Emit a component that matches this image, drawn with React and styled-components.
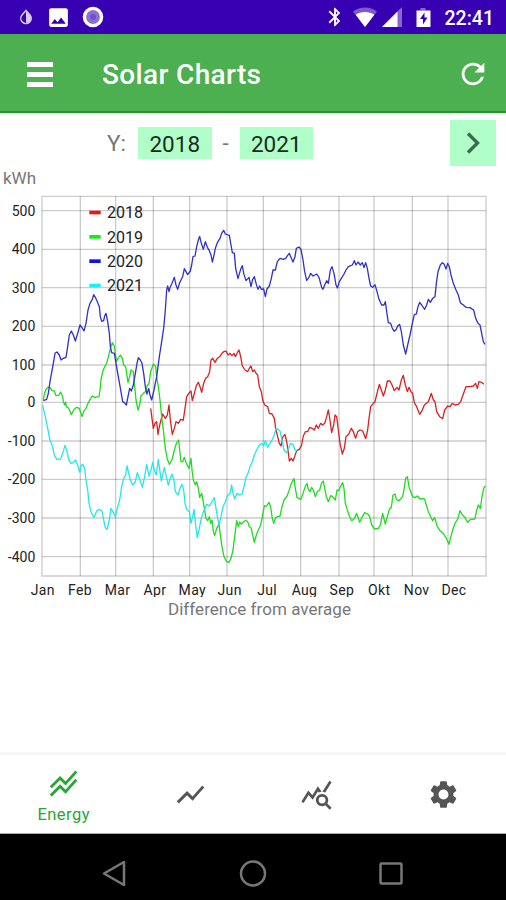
import React from "react"
import styled, { createGlobalStyle } from "styled-components"
import {
  MdBluetooth,
  MdImage,
  MdQueryStats,
  MdRefresh,
  MdSettings,
  MdShowChart,
  MdStackedLineChart,
} from "react-icons/md"

const GlobalStyle = createGlobalStyle`
  body {
    margin: 0;
    background: #fff;
    font-family: Roboto, "Liberation Sans", sans-serif;
  }
  * {
    box-sizing: border-box;
  }
  svg {
    display: block;
    flex: none;
  }
`

const Screen = styled.div`
  display: flex;
  flex-direction: column;
  width: 506px;
  height: 900px;
  overflow: hidden;
`

const StatusBar = styled.div`
  height: 34px;
  background: #3700b3;
  color: #fff;
  display: flex;
  justify-content: space-between;
  padding: 0 12px 0 18px;
`

const StatusGroup = styled.div`
  display: flex;
  align-items: center;
  gap: ${(props) => props.$gap};
`

const Clock = styled.span`
  font-size: 19.5px;
  font-weight: 500;
  margin: 2px 0 0 5px;
`

const AppBar = styled.header`
  height: 79px;
  background: #4caf50;
  border-bottom: 2px solid #1b9a24;
  color: #fff;
  display: flex;
  align-items: center;
  padding: 2px 16px 0 20px;
`

const Title = styled.h1`
  flex: 1;
  margin: 3px 0 0 42px;
  font-size: 28px;
  font-weight: 500;
  line-height: 34px;
  letter-spacing: 0.35px;
`

const IconBox = styled.div`
  margin-top: 2px;
`

const YearRow = styled.div`
  display: flex;
  align-items: center;
  height: 58px;
  margin-top: 1px;
  padding: 0 10px 0 107px;
  color: #777;
  font-size: 22.5px;
`

const Year = styled.div`
  width: 73.5px;
  height: 32px;
  line-height: 34px;
  text-align: center;
  background: #b0ffc8;
  color: #1c2b20;
`

const YearLabel = styled.span`
  width: 31px;
`

const Dash = styled.span`
  width: 28px;
  text-align: center;
`

const NextButton = styled.button`
  margin-left: auto;
  width: 46px;
  height: 46px;
  padding: 0;
  border: 0;
  background: #b0ffc8;
  display: grid;
  place-items: center;
`

const Unit = styled.div`
  height: 18px;
  padding: 0 3px;
  font-size: 17px;
  line-height: 12px;
  color: #777;
`

const Chart = styled.svg`
  width: 506px;
  height: 407px;
`

const AxisText = styled.text`
  font-size: 42px;
  fill: #222;
`

const LegendText = styled.text`
  font-size: 48px;
  fill: #222;
`

const Caption = styled.div`
  margin-top: 2px;
  padding-left: 13px;
  text-align: center;
  font-size: 17px;
  line-height: 20px;
  letter-spacing: 0.05px;
  color: #777;
`

const Tabs = styled.nav`
  margin-top: auto;
  height: 82px;
  border-top: 3px solid #f6f6f6;
  border-bottom: 1px solid #aaa;
  display: grid;
  grid-template-columns: repeat(4, 1fr);
`

const Tab = styled.div`
  display: flex;
  flex-direction: column;
  align-items: center;
  justify-content: center;
  padding: 1px 0 0 1px;
  color: ${(props) => (props.$active ? "#27a536" : "#555")};
  font-size: 16.5px;
  line-height: 20px;
  letter-spacing: 0.5px;
`

const TabLabel = styled.span`
  margin: 5px 0 -2px;
`

const SystemBar = styled.div`
  height: 66px;
  background: #000;
`

// Chart units are thirds of a pixel
const monthLines = [126, 241, 347, 460, 569, 681, 790, 902, 1017, 1122, 1237, 1344]
const months = ["Jan", "Feb", "Mar", "Apr", "May", "Jun", "Jul", "Aug", "Sep", "Okt", "Nov", "Dec"]
const levels = [
  [500, 62],
  [400, 178],
  [300, 293],
  [200, 409],
  [100, 525],
  [0, 637],
  [-100, 753],
  [-200, 868],
  [-300, 984],
  [-400, 1100],
]

// Every part of a series: x offset, y offset, points
const series = [
  {
    year: 2018,
    color: "#d62222",
    swatch: "#f01414",
    parts: [
      [0, 630, "452,25 456,55 460,85 465,70 470,65 474,103 478,80 483,60 488,42 496,55 502,45 507,15 511,60 517,103 523,85 528,65 535,70 542,58 550,60 555,25"],
      [450, 0, "110,620 118,608 123,603 127,632 133,610 139,587 145,577 150,590 155,607 161,580 167,565 173,560 179,545 183,510 188,505 195,517 202,505 209,500 216,490 221,485 228,483 234,495 240,490 246,497 252,490 256,500 262,488 267,480 272,500 277,528 285,540 293,545 298,535 303,528 308,545 313,540 318,550 323,555 328,590 334,605 338,630 344,645 353,650 358,670 366,672 373,685"],
      [450, 630, "377,85 383,110 388,130 393,138 399,110 405,103 410,125 414,150 418,183 424,175 429,183 434,170 440,152 448,148 455,135 460,108 466,95 473,95 479,82 486,85 493,90 499,75 505,85"],
      [960, 630, "2,70 8,75 14,70 20,50 25,30 30,60 35,98 41,75 45,45 50,50 55,90 60,130 67,162 73,145 78,110 86,103 94,85 100,95 107,115 113,95 120,90 128,93 137,116 143,90 147,55 152,20 160,10"],
      [960, 0, "165,635 171,610 178,583 184,600 190,618 196,600 202,573 210,573 216,585 223,602 231,592 237,600 244,570 250,556 256,585 262,605 267,592 273,605 278,610 283,638 290,650 299,673 306,662 313,645 325,635 334,610 340,630 345,635 350,665 359,680 368,686 374,660 383,648 390,650 397,640 405,645 415,643 422,635 430,612 438,590 450,590 460,588 467,580 472,595 477,575 484,577 492,583"],
    ],
  },
  {
    year: 2019,
    color: "#1fdc1f",
    swatch: "#10f010",
    parts: [
      [0, 0, "130,630 133,612 137,600 143,592 150,592 156,602 163,603 168,617 176,616 182,606 188,620 190,635 194,645 197,636 199,650 206,655 214,674 222,658 230,652 238,655 246,680 252,662 258,655 264,640 272,625 277,618 284,622 297,620 300,600 303,570 308,545 314,530 320,520 325,500 329,485 333,470 337,458 343,468 346,490 349,515 354,505 361,495 367,505 371,525 377,530 380,550 384,578 389,560 393,540 400,545 404,590 408,630 414,660 419,645 423,618 430,610 436,605 441,588 447,580 452,545 460,522 467,530 470,560 475,590 480,630"],
      [450, 630, "35,50 40,90 46,145 52,178 58,193 66,180 72,155 79,130 86,120 89,150 93,185 98,185 103,172 109,190 117,205 123,175 126,210 130,240 136,255 140,245 145,265 149,292 155,280 159,300 163,325 168,355 173,362 178,350 182,370 186,360 190,395 194,407 200,385 207,372 211,405 216,440 222,470 230,485 237,487 243,475 249,450 254,410 260,362 265,380 269,366 274,372 281,365 287,361 293,365 298,380 304,385 308,405 313,427 319,405 325,390 332,375 338,345 343,318 350,318 357,307 362,320 366,350 371,370 377,352 383,350 390,348 396,320 402,300 410,290 416,275 424,250 432,236 436,265 441,293 453,298 459,280 465,262 471,250 475,268 480,275 485,262 490,270 496,290 502,275 509,270"],
      [960, 630, "5,248 10,243 14,265 19,290 25,305 32,287 38,290 46,300 51,270 56,272 62,258 68,248 72,265 76,310 82,330 88,348 95,362 104,355 110,340 119,367 126,352 134,338 143,342 149,350 155,375 164,387 175,385 181,375 188,340 196,372 202,350 208,328 214,322 219,285 225,282 229,298 236,303 248,290 253,262 257,235 262,230 267,260 272,275 278,290 284,293 292,288 300,297 313,296 319,315 325,335 332,350 338,362 344,353 352,380 360,392 371,402 379,415 387,433 392,412 398,390 405,370 413,357 420,332 427,345 433,350 443,367 452,358 465,357 469,335 475,315 481,325 486,290 491,265 496,258"],
    ],
  },
  {
    year: 2020,
    color: "#3030c8",
    swatch: "#1010e8",
    parts: [
      [0, 0, "130,632 140,628 145,610 150,575 160,520 165,490 171,486 178,495 183,510 190,505 198,502 203,470 208,435 214,423 220,435 226,453 233,430 240,405 246,413 252,423 258,400 264,360 270,340 277,328 281,314 286,322 292,335 298,350 301,380 305,394 311,392 314,378 318,370 323,395 328,430 331,470 335,488 343,490 348,520 355,560 362,600 368,635 373,638 379,645 384,620 389,595 394,603 400,585 406,550 411,520 415,503 421,510 426,520 431,550 436,590 441,612 446,595 450,615"],
      [450, 0, "5,630 12,600 20,560 28,500 35,455 41,415 46,360 50,300 53,288 57,305 61,290 66,280 73,262 78,285 83,298 89,278 94,268 98,260 103,236 108,245 113,254 121,243 125,225 129,200 135,198 140,170 145,150 149,139 154,160 160,178 166,155 172,172 178,182 183,195 187,216 192,195 196,175 202,158 210,145 215,130 221,121 226,132 238,136 243,165 247,188 253,190 257,235 264,266 269,248 273,235 277,227 281,250 288,272 297,262 303,290 308,268 313,260 319,283 324,298 329,288 334,298 341,297 346,320 351,297 358,288 364,265 369,240 376,240 382,215 390,205 400,208 407,205 413,196 418,190 424,205 429,216 435,200 439,175 447,171 453,178 459,210 464,245 470,271 477,262 482,250 489,258 500,252 507,262"],
      [960, 0, "5,292 9,298 14,285 20,272 25,280 31,240 36,230 42,250 48,285 52,294 58,275 66,262 72,252 78,240 85,230 97,225 103,212 108,225 114,216 121,225 127,218 132,233 137,218 142,235 147,265 152,288 158,292 165,284 171,305 177,328 185,345 192,345 196,335 200,365 205,398 212,400 217,415 223,424 229,418 233,408 239,403 244,425 250,465 257,492 263,465 270,435 277,400 283,374 289,372 294,350 299,337 305,345 314,358 320,345 325,328 331,337 338,325 345,320 349,280 354,245 361,225 367,218 372,222 378,237 383,220 388,230 393,255 400,280 408,300 415,315 421,338 430,345 438,352 450,353 461,360 467,385 474,400 480,405 485,430 490,455 495,463"],
    ],
  },
  {
    year: 2021,
    color: "#25e6ea",
    swatch: "#10f4f8",
    parts: [
      [0, 630, "128,15 130,25 136,50 143,85 150,120 158,140 163,165 170,178 182,177 188,160 195,136 201,155 206,178 213,190 220,188 227,180 233,195 239,217 243,198 248,193 254,205 258,240 263,270 267,310 273,335 282,353 290,333 298,328 306,333 311,360 316,383 321,388 327,365 333,325 339,335 346,350 352,325 359,300 365,260 371,235 377,225 381,197 386,220 391,240 398,255 405,248 412,218 418,235 427,262 433,235 440,193 447,228"],
      [450, 630, "3,210 8,187 13,210 19,225 25,178 30,215 34,243 39,220 43,202 49,230 55,255 61,235 66,222 72,240 76,275 84,285 90,265 96,253 101,270 105,310 110,328 118,335 123,370 128,350 132,328 137,375 142,413 148,385 153,358 160,335 165,325 170,313 177,318 183,310 189,300 193,293 198,325 203,355 207,375 213,350 219,320 226,305 232,288 240,280 245,255 249,280 254,297 261,280 268,285 276,282 282,260 287,235 294,220 300,200 307,185 313,165 320,150 328,135 337,130 341,138 346,122 353,142 360,130 367,118 373,105 378,85 384,88 390,93 396,120 402,150 410,158 416,145 422,130 429,133 435,150 441,152"],
    ],
  },
]

const toPoints = (parts) =>
  parts
    .flatMap(([dx, dy, points]) =>
      points.split(" ").map((point) => {
        const [x, y] = point.split(",").map(Number)
        return `${x + dx},${y + dy}`
      })
    )
    .join(" ")

const EnergyChart = () => (
  <Chart viewBox="0 0 1518 1221">
    <g stroke="#000" strokeOpacity="0.2" strokeWidth="4" fill="none">
      {monthLines.slice(1).map((x) => (
        <path key={x} d={`M${x} 19V1158`} />
      ))}
      {levels.map(([value, y]) => (
        <path key={value} d={`M126 ${y}H1458`} />
      ))}
      <path d="M126 19H1458V1158H126Z" />
    </g>
    {series.map(({ year, color, parts }) => (
      <polyline
        key={year}
        points={toPoints(parts)}
        fill="none"
        stroke={color}
        strokeWidth="3.9"
        strokeLinejoin="round"
      />
    ))}
    {levels.map(([value, y]) => (
      <AxisText key={value} x="106" y={y + 15} textAnchor="end">
        {value}
      </AxisText>
    ))}
    {months.map((month, i) => (
      <AxisText key={month} x={128 + i * 112.2} y="1214" textAnchor="middle" letterSpacing="1">
        {month}
      </AxisText>
    ))}
    {series.map(({ year, swatch }, i) => (
      <g key={year}>
        <rect x="268" y={62 + i * 73} width="34" height="11" fill={swatch} />
        <LegendText x="321" y={85 + i * 73}>
          {year}
        </LegendText>
      </g>
    ))}
  </Chart>
)

const DropIcon = () => (
  <svg width="16" height="18" viewBox="0 0 16 18">
    <path d="M8 2.5 12 7a5.2 5.2 0 1 1-8 0Z" fill="none" stroke="#d8ccf2" strokeWidth="1.5" />
    <path d="M8 3v12a5 5 0 0 0 4-8Z" fill="#d8ccf2" />
  </svg>
)

const RingIcon = () => (
  <svg width="22" height="22" viewBox="0 0 22 22">
    <circle cx="11" cy="11" r="8.6" fill="#8d70d4" stroke="#fff" strokeWidth="3.4" />
    <circle cx="11" cy="11" r="3" fill="#7250c8" />
  </svg>
)

const SignalIcons = () => (
  <svg width="80" height="24" viewBox="0 0 80 24">
    <path d="M0 6.5C7 1.2 17 1.2 24 6.5L12 22Z" fill="#fff" fillOpacity="0.35" />
    <path d="M2.7 9.8C8 6 16 6 21.3 9.8L12 22Z" fill="#fff" />
    <path d="M29 22 49 2V22Z" fill="#fff" fillOpacity="0.4" />
    <path d="M29 22 44.5 6.5V22Z" fill="#fff" />
    <path d="M67.5 3h5V5.5h-5Z" fill="#fff" fillOpacity="0.4" />
    <path d="M63.5 5.5h14v16.5h-14Z" fill="#fff" />
    <path d="M71.5 7.5 67 14h3v5.5l4.5-7h-3Z" fill="#3700b3" />
  </svg>
)

const SystemKeys = () => (
  <svg width="506" height="66" viewBox="0 0 506 66" fill="none" stroke="#777" strokeWidth="2.5">
    <path d="M124 28V51L104 39.5Z" strokeLinejoin="round" />
    <circle cx="253" cy="39.5" r="12" />
    <rect x="380.5" y="29.5" width="21" height="20" rx="1" />
  </svg>
)

const App = () => (
  <>
    <GlobalStyle />
    <Screen>
      <StatusBar>
        <StatusGroup $gap="12px">
          <DropIcon />
          <StatusGroup $gap="11px">
            <MdImage size={25} />
            <RingIcon />
          </StatusGroup>
        </StatusGroup>
        <StatusGroup $gap="7px">
          <MdBluetooth size={22} />
          <SignalIcons />
          <Clock>22:41</Clock>
        </StatusGroup>
      </StatusBar>
      <AppBar>
        <IconBox>
          <svg width="40" height="40" viewBox="0 0 40 40">
            <path d="M7 9.5H33M7 19.5H33M7 29.5H33" stroke="#fff" strokeWidth="5" />
          </svg>
        </IconBox>
        <Title>Solar Charts</Title>
        <MdRefresh size={34} />
      </AppBar>
      <YearRow>
        <YearLabel>Y:</YearLabel>
        <Year>2018</Year>
        <Dash>-</Dash>
        <Year>2021</Year>
        <NextButton>
          <svg width="16" height="24" viewBox="0 0 16 24">
            <path d="M3 2.5 12.5 12 3 21.5" fill="none" stroke="#3b6b4a" strokeWidth="3.4" />
          </svg>
        </NextButton>
      </YearRow>
      <Unit>kWh</Unit>
      <EnergyChart />
      <Caption>Difference from average</Caption>
      <Tabs>
        <Tab $active>
          <MdStackedLineChart size={33} />
          <TabLabel>Energy</TabLabel>
        </Tab>
        <Tab>
          <MdShowChart size={33} />
        </Tab>
        <Tab>
          <MdQueryStats size={33} />
        </Tab>
        <Tab>
          <MdSettings size={33} />
        </Tab>
      </Tabs>
      <SystemBar>
        <SystemKeys />
      </SystemBar>
    </Screen>
  </>
)

export default App
